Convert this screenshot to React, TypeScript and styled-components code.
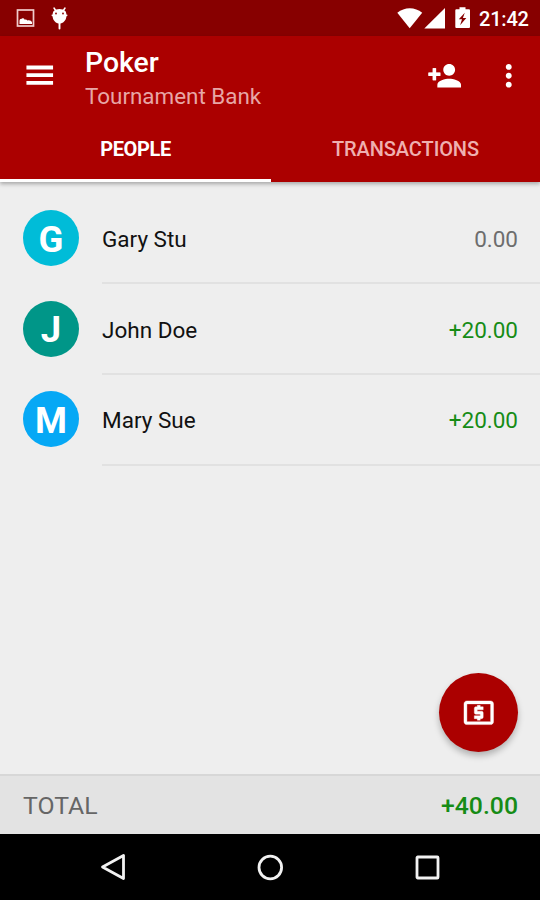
import React from "react";
import styled, { createGlobalStyle } from "styled-components";

const GlobalStyle = createGlobalStyle`
  * { box-sizing: border-box; }
  body { margin: 0; font-family: Roboto, "Liberation Sans", sans-serif; }
`;

const Screen = styled.div`
  width: 540px;
  height: 900px;
  display: flex;
  flex-direction: column;
  position: relative;
  background: #eeeeee;
  overflow: hidden;
`;

const StatusBar = styled.div`
  height: 36px;
  flex: none;
  display: flex;
  justify-content: space-between;
  background: #870000;
  color: #fff;
`;

const StatusGroup = styled.div`
  display: flex;
  height: 36px;
`;

const Clock = styled.span`
  width: 61px;
  font-size: 20px;
  font-weight: 500;
  line-height: 39px;
  letter-spacing: -0.2px;
  white-space: nowrap;
`;

const Header = styled.header`
  height: 145.5px;
  flex: none;
  display: flex;
  flex-direction: column;
  background: #ab0000;
  color: #fff;
  box-shadow: 0 2px 4px rgba(0, 0, 0, 0.3);
  z-index: 1;
`;

const Toolbar = styled.div`
  height: 81px;
  flex: none;
  display: flex;
  align-items: flex-start;
  padding: 0 13.5px 0 22px;
`;

const ToolbarIcon = styled.svg<{ $gap?: number }>`
  width: 35.5px;
  height: 35.5px;
  flex: none;
  fill: #fff;
  margin-top: 21.5px;
  margin-left: ${(p) => p.$gap ?? 0}px;
`;

const Titles = styled.div`
  flex: 1;
  padding: 10px 0 0 27.5px;
`;

const Title = styled.div`
  font-size: 28.4px;
  font-weight: 500;
  line-height: 33px;
`;

const Subtitle = styled.div`
  font-size: 22.4px;
  line-height: 34px;
  color: #e7a6a6;
`;

const Tabs = styled.div`
  flex: 1;
  display: grid;
  grid-template-columns: 271px 1fr;
`;

const Tab = styled.div<{ $active?: boolean }>`
  display: flex;
  justify-content: center;
  padding-top: 19px;
  font-size: 20px;
  line-height: 26px;
  font-weight: ${(p) => (p.$active ? 700 : 500)};
  color: ${(p) => (p.$active ? "#fff" : "#efb0b0")};
  border-bottom: 3.5px solid ${(p) => (p.$active ? "#fff" : "transparent")};
`;

const TabLabel = styled.span<{ $spacing: number }>`
  letter-spacing: ${(p) => p.$spacing}px;
`;

const List = styled.main`
  flex: 1;
  display: flex;
  flex-direction: column;
  padding-top: 12px;
`;

const Row = styled.div`
  height: 90.75px;
  display: grid;
  grid-template-columns: 56px 1fr;
  column-gap: 23px;
  padding-left: 23px;
  align-items: center;
`;

const Avatar = styled.div<{ $color: string }>`
  width: 56px;
  height: 56px;
  margin-bottom: 2px;
  border-radius: 50%;
  display: flex;
  align-items: center;
  justify-content: center;
  background: ${(p) => p.$color};
  color: #fff;
  font-size: 36.5px;
  font-weight: 700;
  line-height: 1;
  padding-top: 4px;
`;

const RowBody = styled.div`
  height: 100%;
  display: flex;
  align-items: center;
  justify-content: space-between;
  padding: 2px 22px 0 0;
  border-bottom: 2px solid #e1e1e1;
  font-size: 22.5px;
  color: #111;
`;

const Amount = styled.span<{ $positive: boolean }>`
  font-size: 22.5px;
  color: ${(p) => (p.$positive ? "#168c16" : "#6d6d6d")};
`;

const Fab = styled.button`
  position: absolute;
  left: 439px;
  top: 673px;
  width: 79px;
  height: 79px;
  padding: 0;
  border: 0;
  border-radius: 50%;
  background: #ab0000;
  display: flex;
  align-items: center;
  justify-content: center;
  box-shadow: 0 4px 6px rgba(0, 0, 0, 0.25);
`;

const FabIcon = styled.svg`
  width: 35.5px;
  height: 35.5px;
  margin-top: 1px;
  fill: #fff;
  stroke: #fff;
  stroke-width: 0.25;
`;

const TotalBar = styled.footer`
  height: 60px;
  flex: none;
  display: flex;
  align-items: center;
  justify-content: space-between;
  padding: 2px 22px 0 23px;
  background: #e3e3e3;
  border-top: 2px solid #d7d7d7;
  font-size: 24.8px;
`;

const TotalLabel = styled.span`
  color: #666;
`;

const TotalValue = styled.span`
  color: #168c16;
  font-weight: 500;
`;

const NavBar = styled.nav`
  height: 66.5px;
  flex: none;
  display: flex;
  justify-content: space-between;
  align-items: center;
  padding: 0 97px;
  background: #000;
`;

const NavIcon = styled.svg`
  width: 32px;
  height: 32px;
  fill: none;
  stroke: #f2f2f2;
  stroke-width: 2.8;
  stroke-linejoin: round;
`;

const people = [
  { name: "Gary Stu", amount: "0.00", color: "#00bcd8" },
  { name: "John Doe", amount: "+20.00", color: "#009688" },
  { name: "Mary Sue", amount: "+20.00", color: "#06a8f5" },
];

const NotificationIcons = () => (
  <svg width="76" height="36" viewBox="0 0 76 36">
    <rect x="17.5" y="10" width="16" height="16" fill="none" stroke="#f0cccc" strokeWidth="1.7" />
    <path d="M19.5 24v-3c0-1.700 1-2.500 2.300-2.300 1.200-.8 2.200-.3 3 1 1-.5 2 0 2.600.8 1.600-.8 4.100-.2 4.600 1.700V24z" fill="#fff" />
    <path d="M54 8l2 3M65 8l-2 3" stroke="#fff" strokeWidth="1.500" strokeLinecap="round" />
    <path d="M53.300 11.500C57 8.300 62 8.300 65.700 11.500c.5 1.200.6 2 .7 3l1.500.5-1.500 1.500C66 20.800 63 23.500 59.500 23.500S53 20.800 52.600 16.500L51.100 15l1.500-.5c.1-1 .2-1.800.7-3z" fill="#fff" />
    <path d="M59.500 22v6.500" stroke="#fff" strokeWidth="1.900" strokeLinecap="round" />
    <circle cx="56" cy="13.500" r="0.900" fill="#870000" />
    <circle cx="63" cy="13.500" r="0.900" fill="#870000" />
  </svg>
);

const SystemIcons = () => (
  <svg width="84" height="36" viewBox="395 0 84 36">
    <path d="M397.300 12.700C404.500 6.600 415 6.600 422.200 12.700L409.700 28.300z" fill="#fff" />
    <path d="M445 8v20.500h-20.700z" fill="#fff" />
    <path
      fillRule="evenodd"
      d="M459.500 7.300h6v2h3.200c.8 0 1.300.5 1.300 1.300v16.100c0 .8-.5 1.300-1.300 1.300h-12.100c-.8 0-1.300-.5-1.300-1.300V10.600c0-.8.500-1.300 1.300-1.300h2.900zM464.800 12.700l-6 6.600h3.200l-1.900 6 6.200-7.200h-3.400z"
      fill="#fff"
    />
  </svg>
);

export default function App() {
  return (
    <>
      <GlobalStyle />
      <Screen>
        <StatusBar>
          <StatusGroup>
            <NotificationIcons />
          </StatusGroup>
          <StatusGroup>
            <SystemIcons />
            <Clock>21:42</Clock>
          </StatusGroup>
        </StatusBar>
        <Header>
          <Toolbar>
            <ToolbarIcon viewBox="0 0 24 24">
              <path d="M3 18.100h18v-2.600H3zM3 12.900h18v-2.600H3zM3 5.100v2.600h18V5.100z" />
            </ToolbarIcon>
            <Titles>
              <Title>Poker</Title>
              <Subtitle>Tournament Bank</Subtitle>
            </Titles>
            <ToolbarIcon viewBox="0 0 24 24">
              <path d="M15 12c2.210 0 4-1.790 4-4s-1.790-4-4-4-4 1.790-4 4 1.790 4 4 4zm-9-2V7H4v3H1v2h3v3h2v-3h3v-2H6zm9 4c-2.670 0-8 1.340-8 4v2h16v-2c0-2.660-5.330-4-8-4z" />
              <path d="M5 7v8M1 11h8" stroke="#fff" strokeWidth="2.4" />
            </ToolbarIcon>
            <ToolbarIcon viewBox="0 0 24 24" $gap={29}>
              <path d="M12 8c1.100 0 2-.9 2-2s-.9-2-2-2-2 .9-2 2 .9 2 2 2zm0 2c-1.100 0-2 .9-2 2s.9 2 2 2 2-.9 2-2-.9-2-2-2zm0 6c-1.100 0-2 .9-2 2s.9 2 2 2 2-.9 2-2-.9-2-2-2z" />
            </ToolbarIcon>
          </Toolbar>
          <Tabs>
            <Tab $active>
              <TabLabel $spacing={-0.4}>PEOPLE</TabLabel>
            </Tab>
            <Tab>
              <TabLabel $spacing={-0.1}>TRANSACTIONS</TabLabel>
            </Tab>
          </Tabs>
        </Header>
        <List>
          {people.map((p) => (
            <Row key={p.name}>
              <Avatar $color={p.color}>{p.name[0]}</Avatar>
              <RowBody>
                <span>{p.name}</span>
                <Amount $positive={p.amount.startsWith("+")}>{p.amount}</Amount>
              </RowBody>
            </Row>
          ))}
        </List>
        <TotalBar>
          <TotalLabel>TOTAL</TotalLabel>
          <TotalValue>+40.00</TotalValue>
        </TotalBar>
        <NavBar>
          <NavIcon viewBox="0 0 32 32">
            <path d="M26.500 4.500v23L5.500 16z" />
          </NavIcon>
          <NavIcon viewBox="0 0 32 32">
            <circle cx="16.300" cy="16.500" r="11.300" />
          </NavIcon>
          <NavIcon viewBox="0 0 32 32">
            <rect x="6" y="6" width="21" height="21" rx="0.800" />
          </NavIcon>
        </NavBar>
        <Fab aria-label="Add transaction">
          <FabIcon viewBox="0 0 24 24">
            <path d="M11 17h2v-1h1c.55 0 1-.45 1-1v-3c0-.55-.45-1-1-1h-3v-1h4V8h-2V7h-2v1h-1c-.55 0-1 .45-1 1v3c0 .55.45 1 1 1h3v1H9v2h2v1zm9-13H4c-1.110 0-1.990.89-1.990 2L2 18c0 1.110.89 2 2 2h16c1.110 0 2-.89 2-2V6c0-1.110-.89-2-2-2zm0 14H4V6h16v12z" />
          </FabIcon>
        </Fab>
      </Screen>
    </>
  );
}
